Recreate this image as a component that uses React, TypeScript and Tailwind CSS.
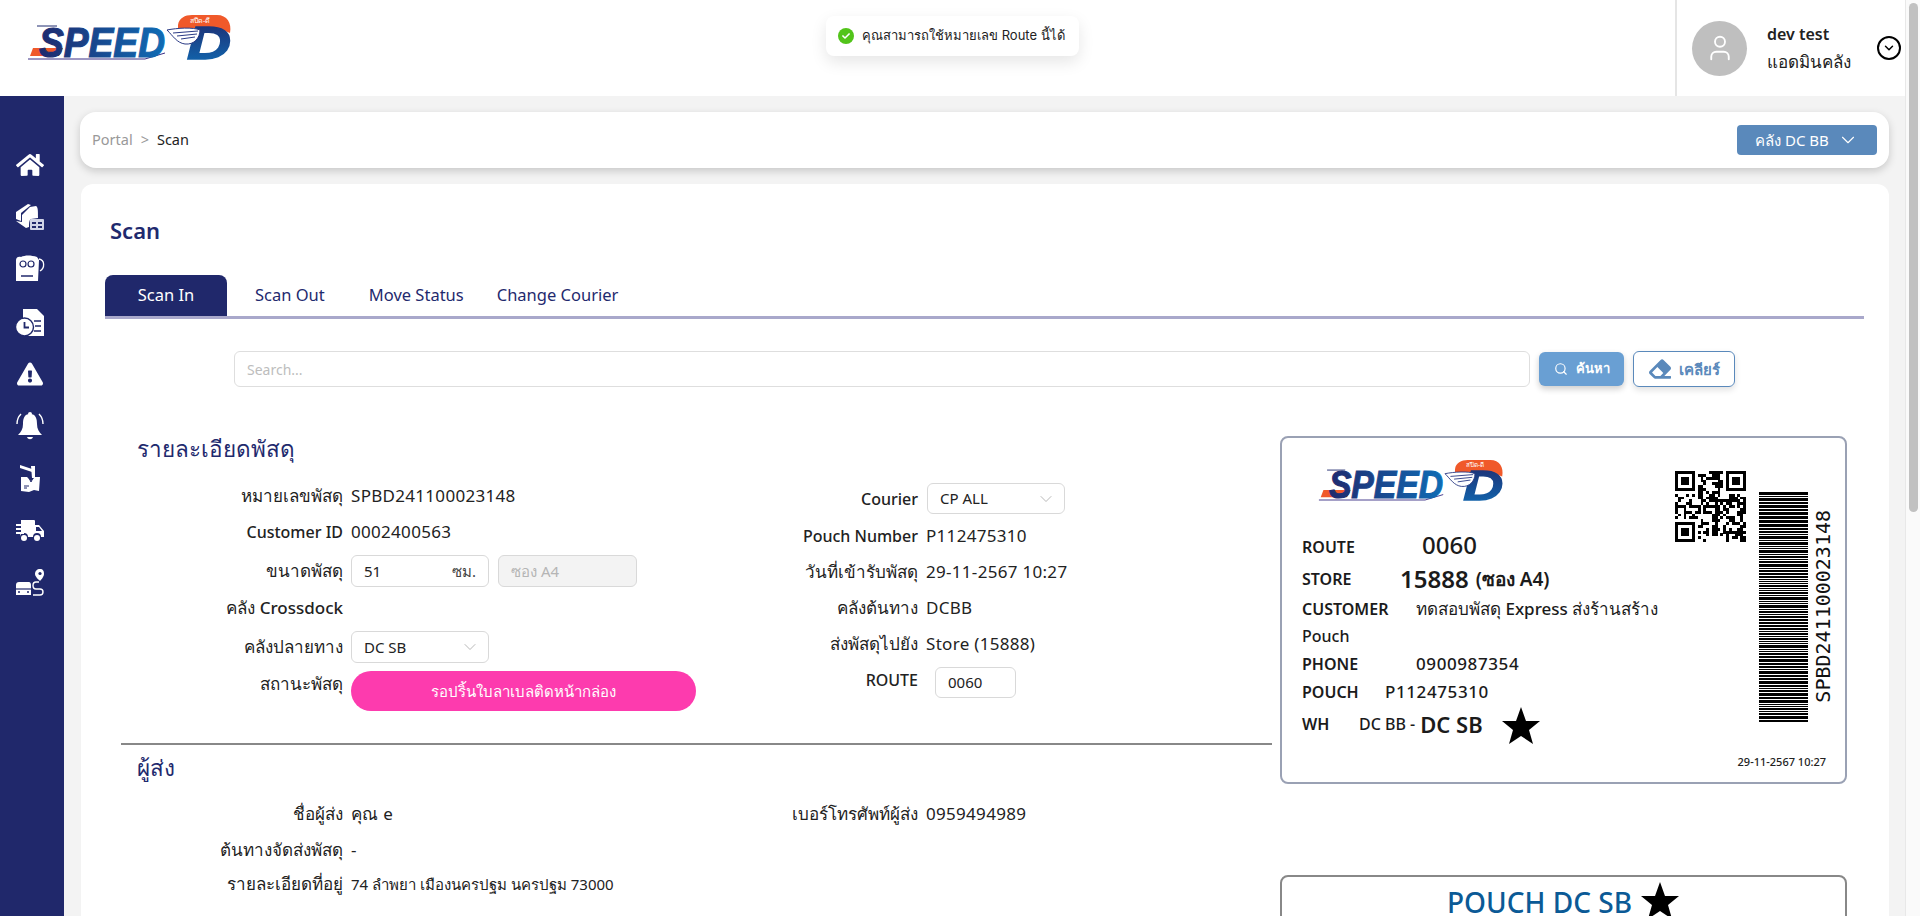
import React from 'react';
import { ChevronDown, Search, User } from 'lucide-react';
import { FaCheck, FaEraser, FaExclamationTriangle, FaHome } from 'react-icons/fa';

const navy = 'text-[#1f2a6e]';

function SpeedLogo({ className, id }: { className: string; id: string }) {
  return (
    <svg viewBox="0 0 205 45" className={`overflow-visible ${className}`}>
      <defs>
        <linearGradient id={`${id}-text`} x1="0" x2="1" y1="0" y2="0">
          <stop offset="0" stopColor="#1f2a6e" />
          <stop offset="1" stopColor="#0f6cb5" />
        </linearGradient>
        <linearGradient id={`${id}-d`} x1="0" x2="0" y1="0" y2="1">
          <stop offset="0" stopColor="#1f2a6e" />
          <stop offset="1" stopColor="#0f6cb5" />
        </linearGradient>
      </defs>
      <path d="M3 41 L6 33 L36 33 L32 41 Z" fill="#f0592a" />
      <path d="M1 44 L118 44 L138 38" stroke="#3b2f86" strokeWidth="1" fill="none" />
      <path d="M10 11 H30" stroke="#1f2a6e" strokeWidth="1" />
      <text x="12" y="42" fontFamily="Liberation Sans" fontWeight="700" fontStyle="italic" fontSize="42" textLength="126" lengthAdjust="spacingAndGlyphs" fill={`url(#${id}-text)`} stroke={`url(#${id}-text)`} strokeWidth="1.2">SPEED</text>
      <path d="M151 10 C152 3 158 0 165 0 H190 C200 0 205 8 203 18 L190 13 H151 Z" fill="#f0592a" />
      <text x="163" y="8" fontFamily="Noto Sans" fontSize="7" fill="#fff">สปีด-ดี</text>
      <text x="160" y="44" fontFamily="Liberation Sans" fontWeight="700" fontStyle="italic" fontSize="46" textLength="44" lengthAdjust="spacingAndGlyphs" fill={`url(#${id}-d)`} stroke={`url(#${id}-d)`} strokeWidth="1.5">D</text>
      <path d="M140 15 C150 13 166 12 173 15 C173 23 167 30 158 29 C150 28 146 21 140 15 Z" fill="#fff" stroke="#2a3a85" strokeWidth="1" />
      <path d="M146 18 L171 16 M150 21 L170 19 M154 24 L168 22" stroke="#2a3a85" strokeWidth="1" />
    </svg>
  );
}

function SharpStar({ className }: { className: string }) {
  return (
    <svg viewBox="0 0 40 40" className={className} fill="#000">
      <polygon points="20,1 25,15 39,15 28,24 32,38 20,30 8,38 12,24 1,15 15,15" />
    </svg>
  );
}

function BoxIcon() {
  return (
    <svg viewBox="0 0 30 28" className="h-[28px] w-[30px]" fill="#fff">
      <path d="M1 9 L13 1 L16 2 L6 10 L6 18 L1 16 Z" />
      <path d="M15 4 L21 3 C23 4 23 7 23 15 L16 16 C14 17 14 20 14 24 L11 25 L1 18 L7 19 L7 12 Z" />
      <rect x="15" y="16" width="14" height="11" rx="1" fill="#cfd3e6" />
      <path d="M17 19 h4 v2 h-4 z M23 19 h4 v2 h-4 z M17 23 h4 v2 h-4 z M23 23 h4 v2 h-4 z" fill="#20286b" />
    </svg>
  );
}

function PouchIcon() {
  return (
    <svg viewBox="0 0 30 28" className="h-[28px] w-[30px]">
      <path d="M1 5 C1 2 4 1 6 2 C10 0 16 0 22 2 L24 5 L23 26 L1 26 Z" fill="#fff" />
      <circle cx="8" cy="9" r="3" fill="none" stroke="#20286b" strokeWidth="1.2" />
      <circle cx="16" cy="9" r="3" fill="none" stroke="#20286b" strokeWidth="1.2" />
      <path d="M6 21 H18" stroke="#20286b" strokeWidth="1.5" />
      <path d="M24 4 C30 5 30 13 25 16" fill="none" stroke="#fff" strokeWidth="1.3" />
    </svg>
  );
}

function DocClockIcon() {
  return (
    <svg viewBox="0 0 30 30" className="h-[30px] w-[30px]">
      <path d="M8 2 H22 L29 9 V29 H12 L8 14 Z" fill="#fff" />
      <path d="M23 2 L29 8 H23 Z" fill="#20286b" />
      <path d="M23 3 L28 8 H23 Z" fill="#fff" />
      <path d="M19 14 H26 M20 19 H26 M19 24 H26" stroke="#20286b" strokeWidth="1.6" />
      <circle cx="9.5" cy="20" r="9" fill="#fff" stroke="#20286b" strokeWidth="1.4" />
      <path d="M9.5 15 V20.5 H14" fill="none" stroke="#20286b" strokeWidth="1.8" />
    </svg>
  );
}

function BellIcon() {
  return (
    <svg viewBox="0 0 28 30" className="h-[30px] w-[28px]">
      <circle cx="14" cy="3" r="2" fill="#fff" />
      <path d="M14 3 C8 3 7 8 7 13 C7 18 5 21 2 24 H26 C23 21 21 18 21 13 C21 8 20 3 14 3 Z" fill="#fff" />
      <path d="M11 26 H17 C16 29 12 29 11 26 Z" fill="#fff" />
      <path d="M5 3 C2 6 1 9 1 13 M23 3 C26 6 27 9 27 13" fill="none" stroke="#fff" strokeWidth="1.4" />
    </svg>
  );
}

function HammerBoxIcon() {
  return (
    <svg viewBox="0 0 26 30" className="h-[30px] w-[26px]">
      <path d="M3 2 L15 6 L15 9 L3 5 Z" fill="#fff" />
      <path d="M14 3 H18 V15 H15 Z" fill="#fff" />
      <path d="M4 14 L10 14 L14 18 L18 14 L23 14 L22 28 L17 27 L12 29 L4 28 Z" fill="#fff" />
      <path d="M7 23 H12 M7 25 H10" stroke="#20286b" strokeWidth="1" />
      <path d="M12 15 L14 19 L16 15" fill="none" stroke="#20286b" strokeWidth="1" />
    </svg>
  );
}

function VanIcon() {
  return (
    <svg viewBox="0 0 30 26" className="h-[26px] w-[30px]">
      <path d="M6 3 H19 C20 3 20 4 20 4 V8 H24 L29 14 V20 H26 A4 4 0 0 0 18 20 H13 A4 4 0 0 0 5 20 H5 V16 H6 Z" fill="#fff" />
      <path d="M21 10 H24 L27 14 H21 Z" fill="#20286b" />
      <path d="M1 8 H11 M1 12 H13 M1 16 H9" stroke="#fff" strokeWidth="2" />
      <circle cx="9" cy="21" r="3" fill="#fff" />
      <circle cx="22" cy="21" r="3" fill="#fff" />
    </svg>
  );
}

function RouteIcon() {
  return (
    <svg viewBox="0 0 30 30" className="h-[30px] w-[30px]">
      <path d="M1 17 C1 15 2 14 4 14 H14 C15 14 16 15 16 17 V27 H1 Z" fill="#fff" />
      <path d="M1 21 H16" stroke="#20286b" strokeWidth="1.2" />
      <circle cx="4" cy="24" r="1" fill="#20286b" />
      <circle cx="13" cy="24" r="1" fill="#20286b" />
      <path d="M18 27 H25 C29 27 29 21 25 21 H21 C17 21 17 14 21 14 H24" fill="none" stroke="#fff" strokeWidth="1.4" />
      <path d="M25 1 C22 1 20 3 20 6 C20 9 25 13 25 13 C25 13 29 9 29 6 C29 3 28 1 25 1 Z" fill="#fff" />
      <circle cx="25" cy="5.5" r="1.6" fill="#20286b" />
    </svg>
  );
}

function SideNav() {
  const items = [
    <FaHome size={28} />,
    <BoxIcon />,
    <PouchIcon />,
    <DocClockIcon />,
    <FaExclamationTriangle size={26} />,
    <BellIcon />,
    <HammerBoxIcon />,
    <VanIcon />,
    <RouteIcon />,
  ];
  return (
    <div className="flex w-16 shrink-0 flex-col bg-[#20286b] pt-[43px]">
      {items.map((icon, i) => (
        <div key={i} className="flex h-[52.2px] items-center justify-center pr-[4px] text-white">
          {icon}
        </div>
      ))}
    </div>
  );
}

function labelSize(label: string) {
  return /[\u0E00-\u0E7F]/.test(label) ? 'text-[17px]' : 'text-[16px]';
}

function Label({ text, className = '' }: { text: string; className?: string }) {
  return <div className={`w-[222px] whitespace-nowrap text-right font-medium text-[#222] ${labelSize(text)} ${className}`}>{text}</div>;
}

function Row({ label, children, small }: { label: string; children?: React.ReactNode; small?: boolean }) {
  return (
    <div className="flex h-9 items-center gap-2">
      <Label text={label} />
      <div className={small ? 'text-[15px] text-[#222]' : 'text-[17px] tracking-[0.3px] text-[#222]'}>{children}</div>
    </div>
  );
}

function Select({ value, className }: { value: string; className: string }) {
  return (
    <div className={`flex h-8 items-center justify-between rounded-md border border-[#d9d9d9] bg-white pl-3 pr-2 text-[15px] text-[#222] ${className}`}>
      <span>{value}</span>
      <ChevronDown size={20} strokeWidth={1} className="text-[#aaa]" />
    </div>
  );
}

function hash(n: number) {
  const x = Math.sin(n * 127.1 + 311.7) * 43758.5453;
  return x - Math.floor(x);
}

function QrCode() {
  const size = 25;
  const cells: React.ReactNode[] = [];
  const finder = (x: number, y: number) =>
    x >= 0 && y >= 0 && x < 7 && y < 7 && (x === 0 || y === 0 || x === 6 || y === 6 || (x >= 2 && x <= 4 && y >= 2 && y <= 4));
  const inFinderZone = (x: number, y: number) => (x < 8 && y < 8) || (x > 16 && y < 8) || (x < 8 && y > 16);
  for (let y = 0; y < size; y++) {
    for (let x = 0; x < size; x++) {
      let on = false;
      if (inFinderZone(x, y)) {
        on = finder(x, y) || finder(x - 18, y) || finder(x, y - 18);
      } else {
        on = hash(x * 31 + y * 17 + 5) > 0.5;
      }
      if (on) cells.push(<rect key={`${x}-${y}`} x={x} y={y} width="1.02" height="1.02" />);
    }
  }
  return (
    <svg viewBox="0 0 25 25" className="h-[71px] w-[71px]" fill="#000" shapeRendering="crispEdges">
      {cells}
    </svg>
  );
}

function Barcode() {
  const bars: React.ReactNode[] = [];
  let y = 0;
  let i = 0;
  while (y < 230) {
    const h = 1 + Math.floor(hash(i) * 2.6);
    bars.push(<rect key={i} x="0" y={y} width="49" height={h} />);
    y += h + 1;
    i++;
  }
  return (
    <svg viewBox="0 0 49 230" className="h-[230px] w-[49px]" fill="#000" shapeRendering="crispEdges">
      {bars}
    </svg>
  );
}

function ShippingLabel() {
  const labelClass = 'text-[16px] font-semibold text-[#1b1b1b]';
  const valueClass = 'text-[17px] font-medium tracking-[0.6px] text-[#1b1b1b]';
  return (
    <div className="h-[348px] w-[567px] rounded-lg border-2 border-[#9aa1b4] bg-white">
      <div className="flex h-full">
        <div className="w-[392px] pl-[20px]">
          <SpeedLogo id="label" className="ml-[16px] mt-[22px] h-[41px] w-[186px]" />
          <div className="mt-[26px] flex h-9 items-center">
            <span className={`${labelClass} w-[120px] pt-[3px]`}>ROUTE</span>
            <span className="text-[24px] font-medium text-[#1b1b1b]">0060</span>
          </div>
          <div className="flex h-[32px] items-center">
            <span className={`${labelClass} w-[98px]`}>STORE</span>
            <span className="text-[24px] font-semibold text-[#1b1b1b]">15888</span>
            <span className="ml-[7px] whitespace-nowrap text-[19px] font-semibold text-[#1b1b1b]">(ซอง A4)</span>
          </div>
          <div className="flex h-[27px] items-center">
            <span className={`${labelClass} w-[114px]`}>CUSTOMER</span>
            <span className="whitespace-nowrap text-[17px] font-medium text-[#1b1b1b]">ทดสอบพัสดุ Express ส่งร้านสร้าง</span>
          </div>
          <div className="flex h-[28px] items-center text-[16px] font-medium text-[#1b1b1b]">Pouch</div>
          <div className="flex h-[28px] items-center">
            <span className={`${labelClass} w-[114px]`}>PHONE</span>
            <span className={valueClass}>0900987354</span>
          </div>
          <div className="flex h-[28px] items-center">
            <span className={`${labelClass} w-[83px]`}>POUCH</span>
            <span className={valueClass}>P112475310</span>
          </div>
          <div className="mt-[-1px] flex h-[38px] items-center">
            <span className={`${labelClass} w-[57px]`}>WH</span>
            <span className="text-[16px] font-medium text-[#1b1b1b]">DC BB -</span>
            <span className="ml-[5px] text-[22px] font-semibold text-[#1b1b1b]">DC SB</span>
            <SharpStar className="ml-[18px] mt-[4px] h-[40px] w-[40px]" />
          </div>
        </div>
        <div className="relative flex-1">
          <div className="absolute left-[1px] top-[33px]">
            <QrCode />
          </div>
          <div className="absolute left-[85px] top-[54px]">
            <Barcode />
          </div>
          <div className="absolute left-[139px] top-[72px] rotate-180 font-['DejaVu_Sans_Mono',monospace] text-[20px] leading-[20px] text-[#111] [writing-mode:vertical-rl]">SPBD241100023148</div>
          <div className="absolute bottom-[12px] right-[19px] text-[11px] font-medium text-[#222]">29-11-2567 10:27</div>
        </div>
      </div>
    </div>
  );
}

export default function App() {
  return (
    <div className="flex h-screen overflow-hidden bg-[#f3f3f3] font-['Noto_Sans',sans-serif]">
      <div className="flex min-w-0 flex-1 flex-col">
        {/* Header */}
        <div className="relative flex h-24 shrink-0 items-center justify-between bg-white">
          <SpeedLogo id="top" className="ml-[27px] mb-[22px] h-[45px] w-[205px]" />
          <div className="absolute left-[826px] top-[16px] flex h-10 w-[253px] items-center gap-2 rounded-lg bg-white pl-3 font-['Inter',sans-serif] text-[13px] whitespace-nowrap text-[#222] shadow-[0_6px_16px_rgba(0,0,0,0.1)]">
            <span className="flex h-4 w-4 shrink-0 items-center justify-center rounded-full bg-[#52c41a] text-white">
              <FaCheck size={8} />
            </span>
            คุณสามารถใช้หมายเลข Route นี้ได้
          </div>
          <div className="flex h-full w-[230px] items-center border-l-2 border-[#e5e5e5] pl-[15px]">
            <div className="flex h-[55px] w-[55px] items-center justify-center rounded-full bg-[#bfbfbf] text-white">
              <User size={30} strokeWidth={1.5} />
            </div>
            <div className="ml-5 w-[110px] leading-[28px] text-[#222]">
              <div className="text-[16px] font-semibold">dev test</div>
              <div className="whitespace-nowrap text-[17px] font-medium">แอดมินคลัง</div>
            </div>
            <div className="flex h-[24px] w-[24px] items-center justify-center rounded-full border-2 border-black">
              <ChevronDown size={14} strokeWidth={2.5} />
            </div>
          </div>
        </div>

        <div className="flex min-h-0 flex-1">
          <SideNav />
          <div className="min-w-0 flex-1 pl-4 pr-4 pt-4">
            {/* Breadcrumb */}
            <div className="flex h-14 items-center justify-between rounded-2xl bg-white pl-3 pr-3 shadow-[0_3px_8px_rgba(0,0,0,0.18)]">
              <div className="flex items-center gap-2 text-[14.5px]">
                <span className="text-[#999]">Portal</span>
                <span className="text-[#999]">&gt;</span>
                <span className="text-[#222]">Scan</span>
              </div>
              <div className="flex h-[30px] w-[140px] items-center justify-center gap-2 rounded bg-[#5a89bb] text-[15px] text-white">
                คลัง DC BB
                <ChevronDown size={22} strokeWidth={1.2} />
              </div>
            </div>

            {/* Content */}
            <div className="ml-px mt-4 h-[800px] rounded-t-xl bg-white pl-6 pr-[25px] pt-8">
              <h1 className={`h-7 pl-[5px] text-[22px] font-semibold leading-7 ${navy}`}>Scan</h1>

              <div className="mt-[31px] flex h-[44px] items-stretch border-b-[3px] border-[#a9a8cb] text-[16.5px]">
                <div className="flex w-[122px] items-center justify-center rounded-t-lg bg-[#20286b] text-white">Scan In</div>
                <div className={`ml-[28px] flex items-center ${navy}`}>Scan Out</div>
                <div className={`ml-[44px] flex items-center ${navy}`}>Move Status</div>
                <div className={`ml-[33px] flex items-center ${navy}`}>Change Courier</div>
              </div>

              <div className="mt-[32px] flex h-9 items-center gap-[9px] px-[129px]">
                <div className="flex h-9 flex-1 items-center rounded-md border border-[#dedede] pl-3 text-[14px] text-[#bdbdbd]">Search...</div>
                <div className="flex h-[34px] w-[85px] items-center justify-center gap-2 rounded-md bg-[#699fd3] text-[13px] font-semibold text-white shadow-[0_3px_6px_rgba(0,0,0,0.2)]">
                  <Search size={14} />
                  ค้นหา
                </div>
                <div className="flex h-9 w-[102px] items-center justify-center gap-2 rounded-md border border-[#5a89bb] text-[15px] font-semibold text-[#5a89bb] shadow-[0_3px_6px_rgba(0,0,0,0.12)]">
                  <FaEraser size={22} />
                  เคลียร์
                </div>
              </div>

              <div className="mt-[45px] flex">
                <div className="ml-4 w-[1151px] shrink-0">
                  <h2 className={`h-[34px] pl-4 text-[22.5px] font-medium leading-[34px] ${navy}`}>รายละเอียดพัสดุ</h2>
                  <div className="mt-[12px] flex">
                    <div className="w-[575px]">
                      <Row label="หมายเลขพัสดุ">SPBD241100023148</Row>
                      <Row label="Customer ID">0002400563</Row>
                      <div className="mt-[5px] flex h-8 items-center gap-2">
                        <Label text="ขนาดพัสดุ" />
                        <div className="flex h-8 w-[138px] items-center justify-between rounded-md border border-[#d9d9d9] px-3 text-[15px] text-[#222]">
                          <span>51</span>
                          <span className="text-[#444]">ซม.</span>
                        </div>
                        <div className="ml-px flex h-8 w-[139px] items-center rounded-md border border-[#d9d9d9] bg-[#f3f3f3] px-3 text-[15px] text-[#b5b5b5]">ซอง A4</div>
                      </div>
                      <div className="mt-[3px]">
                        <Row label="คลัง Crossdock" />
                      </div>
                      <div className="mt-[5px] flex h-8 items-center gap-2">
                        <Label text="คลังปลายทาง" />
                        <Select value="DC SB" className="w-[138px]" />
                      </div>
                      <div className="mt-2 flex h-10 items-start gap-2">
                        <Label text="สถานะพัสดุ" className="leading-[26px]" />
                        <div className="flex h-10 w-[346px] items-center justify-center rounded-full bg-[#fd3bae] text-[15px] text-white">รอปริ้นใบลาเบลติดหน้ากล่อง</div>
                      </div>
                    </div>
                    <div className="mt-[5px] w-[576px]">
                      <div className="flex h-[31px] items-center gap-[9px]">
                        <Label text="Courier" />
                        <Select value="CP ALL" className="h-[31px] w-[138px]" />
                      </div>
                      <div className="mt-1">
                        <Row label="Pouch Number">P112475310</Row>
                        <Row label="วันที่เข้ารับพัสดุ">29-11-2567 10:27</Row>
                        <Row label="คลังต้นทาง">DCBB</Row>
                        <Row label="ส่งพัสดุไปยัง">Store (15888)</Row>
                      </div>
                      <div className="mt-[5px] flex h-[31px] items-start gap-[17px]">
                        <Label text="ROUTE" className="leading-[26px]" />
                        <div className="flex h-[31px] w-[81px] items-center rounded-md border border-[#d9d9d9] pl-3 text-[15px] text-[#222]">0060</div>
                      </div>
                    </div>
                  </div>

                  <div className="mt-[32px] h-[2px] bg-[#888]" />

                  <h2 className={`mt-[6px] h-[34px] pl-4 text-[22.5px] font-medium leading-[34px] ${navy}`}>ผู้ส่ง</h2>
                  <div className="mt-[11px] flex">
                    <div className="w-[575px]">
                      <Row label="ชื่อผู้ส่ง">คุณ e</Row>
                      <Row label="ต้นทางจัดส่งพัสดุ">-</Row>
                      <div className="mt-[-2px]">
                        <Row label="รายละเอียดที่อยู่" small>74 ลำพยา เมืองนครปฐม นครปฐม 73000</Row>
                      </div>
                    </div>
                    <div className="w-[576px]">
                      <Row label="เบอร์โทรศัพท์ผู้ส่ง">0959494989</Row>
                    </div>
                  </div>
                </div>

                <div className="ml-[8px] mt-1 shrink-0">
                  <ShippingLabel />
                  <div className="mt-[91px] flex h-[100px] w-[567px] justify-center gap-2 rounded-lg border-2 border-[#888] pt-[4px] text-[28px] font-medium text-[#0b5a96]">
                    POUCH DC SB
                    <SharpStar className="h-[40px] w-[40px]" />
                  </div>
                </div>
              </div>
            </div>
          </div>
        </div>
      </div>

      {/* Scrollbar */}
      <div className="w-[15px] shrink-0 border-l border-[#e8e8e8] bg-[#fafafa] pl-[3px] pr-[2px] pt-[3px]">
        <div className="h-[509px] rounded-full bg-[#c1c1c1]" />
      </div>
    </div>
  );
}
